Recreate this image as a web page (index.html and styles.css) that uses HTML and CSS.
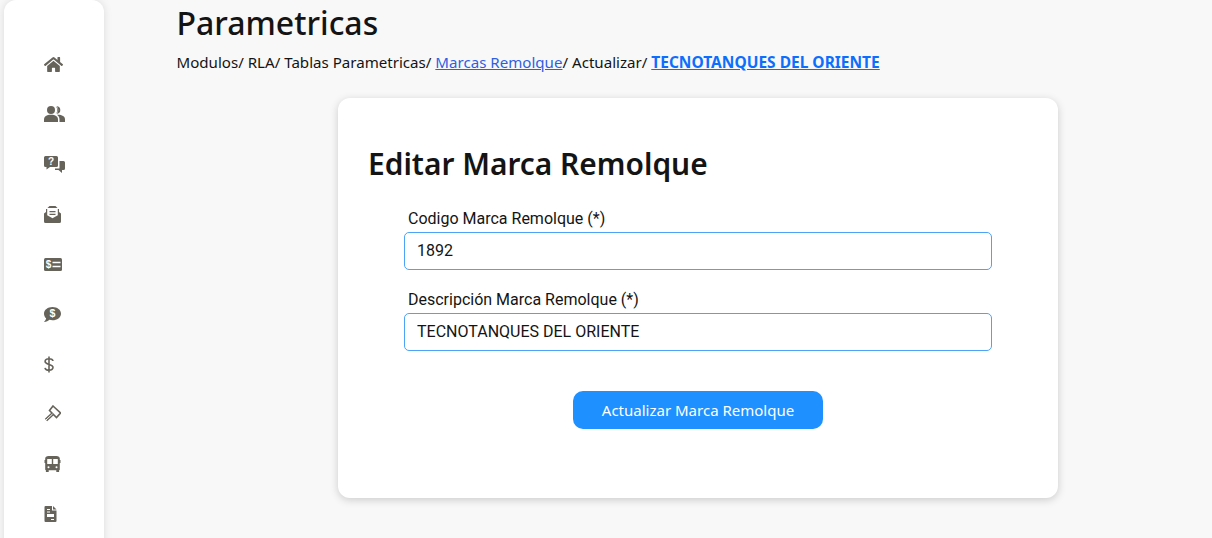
FILE: index.html
```html
<!DOCTYPE html>
<html lang="es">
<head>
    <meta charset="UTF-8">
    <meta name="viewport" content="width=device-width, initial-scale=1.0">
    <title>Parametricas</title>
    <link rel="stylesheet" href="styles.css">
</head>
<body>
    <nav class="sidebar">
        <a class="nav-item"><svg class="icon" width="19" height="17" viewBox="0 0 576 512"><path d="M280.37 148.26L96 300.11V464a16 16 0 0 0 16 16l112.06-.29a16 16 0 0 0 15.92-16V368a16 16 0 0 1 16-16h64a16 16 0 0 1 16 16v95.64a16 16 0 0 0 16 16.05L464 480a16 16 0 0 0 16-16V300L295.67 148.26a12.19 12.19 0 0 0-15.3 0zM571.6 251.47L488 182.56V44.05a12 12 0 0 0-12-12h-56a12 12 0 0 0-12 12v72.61L318.47 43a48 48 0 0 0-61 0L4.34 251.47a12 12 0 0 0-1.6 16.9l25.5 31A12 12 0 0 0 45.15 301l235.22-193.74a12.19 12.19 0 0 1 15.3 0L530.9 301a12 12 0 0 0 16.9-1.6l25.5-31a12 12 0 0 0-1.7-16.93z"/></svg></a>
        <a class="nav-item"><svg class="icon" width="21" height="16" viewBox="0 0 21 16"><circle cx="7" cy="4" r="4"/><path d="M0 16v-2.500C0 10.500 2.500 8.800 7 8.800s7 1.700 7 4.700V16z"/><path d="M11.800.4a4 4 0 0 1 0 7.200 5 5 0 0 0 0-7.200z"/><path d="M12.500.2A3.800 3.800 0 1 1 12.500 7.800 5 5 0 0 0 12.500.200z"/><path d="M13 8.800c4.500-.3 8 1.400 8 4.400V16h-5.500v-2.500c0-1.900-.8-3.500-2.500-4.700z"/></svg></a>
        <a class="nav-item"><svg class="icon" width="21" height="17" viewBox="0 0 21 17"><path d="M1.500 0h11A1.500 1.500 0 0 1 14 1.500v8a1.500 1.500 0 0 1-1.500 1.500H6l-3.500 2.500V11h-1A1.500 1.500 0 0 1 0 9.500v-8A1.500 1.500 0 0 1 1.500 0z"/><path d="M15.500 5h4A1.500 1.500 0 0 1 21 6.500v6a1.500 1.500 0 0 1-1.500 1.500H18v3l-3.500-3H11v-1.500h4a.5.5 0 0 0 .5-.5z"/><text class="icon-mark" x="7" y="9" text-anchor="middle">?</text></svg></a>
        <a class="nav-item"><svg class="icon" width="17" height="17" viewBox="0 0 17 17"><path d="M0 7.500 2 6V3h13v3l2 1.500V15.500A1.500 1.500 0 0 1 15.500 17h-14A1.500 1.500 0 0 1 0 15.500z"/><path class="icon-cut" d="M3.200 2.800h10.600v6.500L8.500 12.300 3.200 9.300z"/><path d="M5.500 0h6l2 2h-10zM5.500 5h6v1.300h-6zM5.500 7.700h6V9h-6z"/></svg></a>
        <a class="nav-item"><svg class="icon" width="18" height="13" viewBox="0 0 18 13"><rect width="18" height="13" rx="1.500"/><path class="icon-cut" d="M8.500 3.700H16.500v1.500H8.500zM8.500 7.700H16.500v1.500H8.500z"/><text class="icon-mark" x="4.500" y="10.200" text-anchor="middle">$</text></svg></a>
        <a class="nav-item"><svg class="icon" width="17" height="15" viewBox="0 0 16 14"><path d="M8 0c4.400 0 8 2.700 8 6.200s-3.600 6.200-8 6.200c-1 0-2-.2-2.900-.4C4 13 2.300 14 0 14c1-.9 1.800-2.200 2-3.400C.8 9.400 0 7.900 0 6.200 0 2.700 3.600 0 8 0z"/><text class="icon-mark" x="8" y="9.800" text-anchor="middle">$</text></svg></a>
        <a class="nav-item"><svg class="icon-line" width="10" height="17" viewBox="0 0 10 17"><path d="M9 5C8.800 3.500 7 2.800 5 2.800 2.800 2.800 1.100 3.900 1.100 5.600 1.100 9.200 9 7.700 9 11.300 9 13.100 7.200 14.200 5 14.200 2.800 14.200 1.200 13.300 1 11.800M5 .5V16.500"/></svg></a>
        <a class="nav-item"><svg class="icon-line" width="17" height="18" viewBox="0 0 17 18"><path class="icon-cut" d="M9 1l7.500 7-4 4.500L5.500 5.500z"/><path d="M8.500 9 2 15"/><path class="icon-cut icon-thin" d="M8.500 9 2 15"/></svg></a>
        <a class="nav-item"><svg class="icon" width="17" height="16" viewBox="0 0 16 16"><path d="M4 0h8c2 0 3.300 1 3.300 2.500V4h.7v3h-.7v6.500c0 .5-.3.800-.7.800V16h-2.800v-1.700H4.200V16H1.400v-1.700c-.4 0-.7-.3-.7-.8V7H0V4h.7V2.500C.7 1 2 0 4 0z"/><path class="icon-cut" d="M2.700 3h4.600v5H2.700zM8.700 3h4.600v5H8.700z"/><circle class="icon-cut" cx="4" cy="11.300" r="1"/><circle class="icon-cut" cx="12" cy="11.300" r="1"/></svg></a>
        <a class="nav-item"><svg class="icon" width="13" height="16" viewBox="0 0 12 16"><path d="M1 0h6.500v4.500H12V15a1 1 0 0 1-1 1H1a1 1 0 0 1-1-1V1a1 1 0 0 1 1-1z"/><path d="M8.500 0 12 3.500H8.500z"/><path class="icon-cut" d="M2.500 3h3v1h-3zM2.500 5.500h3v1h-3zM2.500 8h7v3h-7zM6.500 13h3v1h-3z"/></svg></a>
    </nav>

    <main class="content">
        <h1 class="page-title">Parametricas</h1>
        <p class="breadcrumb">Modulos/ RLA/ Tablas Parametricas/ <a href="#">Marcas Remolque</a>/ Actualizar/ <a href="#" class="current">TECNOTANQUES DEL ORIENTE</a></p>

        <section class="card">
            <h2 class="card-title">Editar Marca Remolque</h2>
            <form class="form">
                <div class="field">
                    <label for="codigo">Codigo Marca Remolque (*)</label>
                    <input id="codigo" type="text" value="1892">
                </div>
                <div class="field">
                    <label for="descripcion">Descripción Marca Remolque (*)</label>
                    <input id="descripcion" type="text" value="TECNOTANQUES DEL ORIENTE">
                </div>
                <button class="submit" type="button">Actualizar Marca Remolque</button>
            </form>
        </section>
    </main>
</body>
</html>
```

FILE: styles.css
```css
html, body {
    height: 100%;
}

body {
    margin: 0;
    height: 538px;
    overflow: hidden;
    display: flex;
    font-family: "Noto Sans", sans-serif;
    background-color: #f8f8f8;
    color: #141414;
}

.sidebar {
    width: 100px;
    height: 560px;
    margin-left: 4px;
    padding-top: 39px;
    box-sizing: border-box;
    flex-shrink: 0;
    background-color: #fff;
    border-radius: 12px 12px 0 0;
    box-shadow: 0 0 8px rgba(0, 0, 0, 0.12);
}

.nav-item {
    display: flex;
    align-items: center;
    height: 50px;
    padding-left: 40px;
}

.icon {
    fill: #66635a;
}

.icon-line {
    fill: none;
    stroke: #66635a;
    stroke-width: 1.6;
}

.icon-cut {
    fill: #fff;
}

.icon-thin {
    stroke: #fff;
    stroke-width: 1;
}

.icon-line path:nth-child(2) {
    stroke-width: 3.4;
}

.icon-line path.icon-thin {
    stroke-width: 1;
}

.icon-mark {
    fill: #fff;
    font-family: "Liberation Sans", sans-serif;
    font-size: 10px;
    font-weight: 700;
}

.content {
    flex: 1;
    padding-left: 72.5px;
}

.page-title {
    margin: 0;
    font-size: 32px;
    font-weight: 500;
    line-height: 46px;
}

.breadcrumb {
    margin: 5px 0 0;
    font-size: 15.1px;
    line-height: 22px;
}

.breadcrumb a {
    color: #2f5fe0;
}

.breadcrumb .current {
    color: #0d6efd;
    font-size: 15.5px;
    font-weight: 700;
}

.card {
    width: 720px;
    height: 400px;
    margin: 25px 0 0 161.5px;
    padding: 46px 30px 0;
    box-sizing: border-box;
    background-color: #fff;
    border-radius: 12px;
    box-shadow: 0 2px 8px rgba(0, 0, 0, 0.18);
}

.card-title {
    margin: 0;
    font-size: 29.9px;
    font-weight: 600;
    line-height: 40px;
}

.form {
    display: flex;
    flex-direction: column;
    align-items: center;
    margin-top: 23px;
}

.field {
    width: 588px;
    margin-bottom: 18px;
}

.field label {
    display: block;
    padding-left: 4px;
    margin-bottom: 1px;
    font-family: Roboto, sans-serif;
    font-size: 16px;
    line-height: 24px;
}

.field input {
    display: block;
    width: 100%;
    height: 38px;
    padding: 0 12px 2px;
    box-sizing: border-box;
    border: 1px solid #4da3f5;
    border-radius: 5px;
    font-family: Roboto, sans-serif;
    font-size: 16px;
    color: #141414;
    outline: none;
}

.submit {
    width: 250px;
    height: 38px;
    margin-top: 22px;
    border: none;
    border-radius: 10px;
    background-color: #1e90ff;
    color: #fff;
    font-family: "Noto Sans", sans-serif;
    font-size: 15px;
}
```
